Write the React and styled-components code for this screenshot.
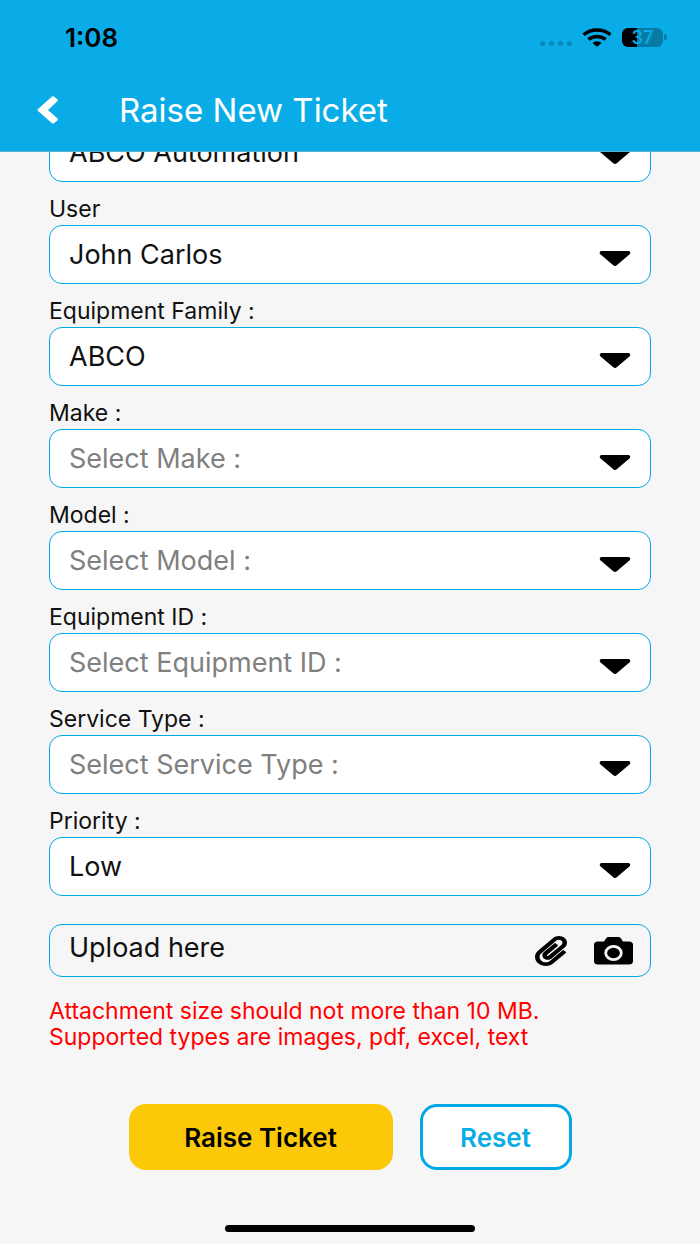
import { useLayoutEffect, useRef } from "react";
import styled, { createGlobalStyle } from "styled-components";
import { FaPaperclip } from "react-icons/fa";

const fields = [
  { id: "company", hint: "Company", value: "ABCO Automation" },
  { id: "user", label: "User", value: "John Carlos" },
  { id: "family", label: "Equipment Family :", value: "ABCO" },
  { id: "make", label: "Make :", placeholder: "Select Make :" },
  { id: "model", label: "Model :", placeholder: "Select Model :" },
  { id: "equipment", label: "Equipment ID :", placeholder: "Select Equipment ID :" },
  { id: "service", label: "Service Type :", placeholder: "Select Service Type :" },
  { id: "priority", label: "Priority :", value: "Low" },
];

const SelectField = ({ id, label, hint, value, placeholder }) => (
  <Field>
    {label && <Label htmlFor={id}>{label}</Label>}
    <SelectBox>
      <Select id={id} aria-label={hint} $empty={!value} defaultValue={value || ""}>
        <option value={value || ""}>{value || placeholder}</option>
      </Select>
      <Caret viewBox="0 0 32 16" aria-hidden="true">
        <path d="M2 0H30Q32 1 31 3L18 14Q16 16 14 14L1 3Q0 1 2 0Z" />
      </Caret>
    </SelectBox>
  </Field>
);

const App = () => {
  const scroller = useRef(null);

  // the form opens scrolled down to its buttons
  useLayoutEffect(() => {
    scroller.current.scrollTop = scroller.current.scrollHeight;
  }, []);

  return (
    <Screen>
      <GlobalStyle />
      <Header>
        <StatusBar>
          <Clock>1:08</Clock>
          <StatusIcons>
            <Dots>
              <i />
              <i />
              <i />
              <i />
            </Dots>
            <svg width="30" height="19" viewBox="0 0 30 19" aria-hidden="true">
              <g fill="none" stroke="#000" strokeWidth="3.4">
                <path d="M1.6 6.8C9 .4 21 .4 28.4 6.8" />
                <path d="M6.4 11.6C11 7.4 19 7.4 23.6 11.6" />
              </g>
              <path d="M10.4 14.8Q15 11.6 19.6 14.8L15.8 18.2Q15 18.8 14.2 18.2Z" />
            </svg>
            <Battery>
              <Charge>37</Charge>
              <Tip />
            </Battery>
          </StatusIcons>
        </StatusBar>
        <TitleBar>
          <BackButton type="button" aria-label="Back">
            <svg width="22" height="28" viewBox="0 0 22 28" aria-hidden="true">
              <path
                fill="#fff"
                d="M15 .6Q16 0 17 .6L20.6 3.4Q21.4 4.2 20.6 5L11 14L20.6 22.6Q21.4 23.4 20.6 24.2L17 27.2Q16 28 15 27.2L.8 14.8Q0 14 .8 13.2Z"
              />
            </svg>
          </BackButton>
          <Title>Raise New Ticket</Title>
        </TitleBar>
      </Header>

      <Scroller ref={scroller}>
        <Form onSubmit={(e) => e.preventDefault()}>
          {fields.map((field) => (
            <SelectField key={field.id} {...field} />
          ))}
          <Upload>
            <UploadText>Upload here</UploadText>
            <IconButton type="button" aria-label="Attach a file">
              <ClipIcon preserveAspectRatio="none" />
            </IconButton>
            <IconButton type="button" aria-label="Take a photo">
              <svg width="39" height="28" viewBox="0 0 39 28" aria-hidden="true">
                <path d="M4 4.4H10L12 1.4Q13 0 15 0H24Q26 0 27 1.4L29 4.4H35Q39 4.4 39 8V24Q39 27.6 35 27.6H4Q0 27.6 0 24V8Q0 4.4 4 4.4Z" />
                <ellipse cx="19.5" cy="16" rx="7.8" ry="6.6" fill="none" stroke="#f6f6f6" strokeWidth="2.8" />
              </svg>
            </IconButton>
          </Upload>
          <Note>
            Attachment size should not more than 10 MB.
            <br />
            Supported types are images, pdf, excel, text
          </Note>
          <Actions>
            <Button type="submit">Raise Ticket</Button>
            <Button type="reset" $outlined>
              Reset
            </Button>
          </Actions>
        </Form>
      </Scroller>

      <HomeIndicator />
    </Screen>
  );
};

const GlobalStyle = createGlobalStyle`
  * {
    box-sizing: border-box;
  }
  body {
    margin: 0;
    background: #f6f6f6;
    color: #111;
    font-family: Inter, "Liberation Sans", sans-serif;
  }
  button, select {
    font-family: inherit;
  }
  // keeps the colon on the baseline after capitals
  label, select {
    font-variant-ligatures: no-contextual;
  }
`;

const Screen = styled.div`
  display: flex;
  flex-direction: column;
  height: 100vh;
`;

const Header = styled.header`
  flex: none;
  background: #09ace6;
  border-bottom: 1px solid #5aaed0;
`;

const StatusBar = styled.div`
  display: flex;
  align-items: center;
  justify-content: space-between;
  height: 74px;
  padding: 0 33px 0 65px;
`;

const Clock = styled.span`
  color: #000;
  font-size: 26px;
  font-weight: 600;
`;

const StatusIcons = styled.div`
  display: flex;
  align-items: center;
  gap: 10px;
`;

const Dots = styled.div`
  display: flex;
  gap: 4px;
  padding-top: 12px;

  i {
    width: 5px;
    height: 5px;
    border-radius: 2px;
    background: #078bba;
  }
`;

const Battery = styled.div`
  display: flex;
  align-items: center;
  gap: 1px;
`;

const Charge = styled.span`
  width: 41px;
  border-radius: 6px;
  background: linear-gradient(to right, #000 37%, #077ba4 37%);
  color: #09ace6;
  font-size: 18px;
  font-weight: 600;
  line-height: 19px;
  text-align: center;
`;

const Tip = styled.span`
  width: 3px;
  height: 6px;
  border-radius: 0 3px 3px 0;
  background: #077ba4;
`;

const TitleBar = styled.div`
  display: flex;
  align-items: center;
  gap: 60px;
  height: 77px;
  padding: 0 37px 6px;
`;

const BackButton = styled.button`
  display: flex;
  padding: 0;
  border: none;
  background: none;
`;

const Title = styled.h1`
  margin: 0;
  color: #fff;
  font-size: 33px;
  font-weight: 400;
  line-height: 40px;
`;

const Scroller = styled.main`
  flex: 1;
  min-height: 0;
  overflow-y: auto;
  scrollbar-width: none;
`;

const Form = styled.form`
  display: flex;
  flex-direction: column;
  padding: 0 7% 44px;
`;

const Field = styled.div`
  display: flex;
  flex-direction: column;

  & + & {
    margin-top: 14px;
  }
`;

const Label = styled.label`
  padding-bottom: 3px;
  font-size: 23px;
  line-height: 26px;
`;

// the caret shares the select's grid cell
const SelectBox = styled.div`
  display: grid;
  align-items: center;

  & > * {
    grid-area: 1 / 1;
  }
`;

const Select = styled.select`
  width: 100%;
  height: 59px;
  padding: 0 60px 0 19px;
  border: 1px solid #00a8e6;
  border-radius: 13px;
  background: #fff;
  color: ${({ $empty }) => ($empty ? "#808080" : "#111")};
  font-size: 27px;
  appearance: none;
`;

const Caret = styled.svg`
  justify-self: end;
  width: 32px;
  height: 16px;
  margin: 8px 20px 0 0;
  pointer-events: none;
`;

const Upload = styled.div`
  display: flex;
  align-items: center;
  gap: 27px;
  height: 53px;
  margin-top: 28px;
  padding: 0 17px 0 19px;
  border: 1px solid #00a8e6;
  border-radius: 13px;
`;

const UploadText = styled.span`
  flex: 1;
  padding-bottom: 7px;
  font-size: 27px;
`;

const IconButton = styled.button`
  display: flex;
  padding: 0;
  border: none;
  background: none;
  color: #000;
`;

const ClipIcon = styled(FaPaperclip)`
  width: 32px;
  height: 30px;
`;

const Note = styled.p`
  margin: 21px 0 0;
  color: #ff0000;
  font-size: 23px;
  line-height: 26px;
`;

const Actions = styled.div`
  display: flex;
  justify-content: center;
  gap: 27px;
  margin-top: 54px;
`;

const Button = styled.button`
  flex: 0 1 ${({ $outlined }) => ($outlined ? "152px" : "264px")};
  height: 66px;
  border: ${({ $outlined }) => ($outlined ? "3px solid #00a8e6" : "none")};
  border-radius: 17px;
  background: ${({ $outlined }) => ($outlined ? "#fff" : "#fbc908")};
  color: ${({ $outlined }) => ($outlined ? "#09ace6" : "#000")};
  font-size: 26px;
  font-weight: 600;
`;

const HomeIndicator = styled.div`
  flex: none;
  align-self: center;
  width: 250px;
  height: 7px;
  margin: 11px 0 12px;
  border-radius: 4px;
  background: #000;
`;

export default App;
